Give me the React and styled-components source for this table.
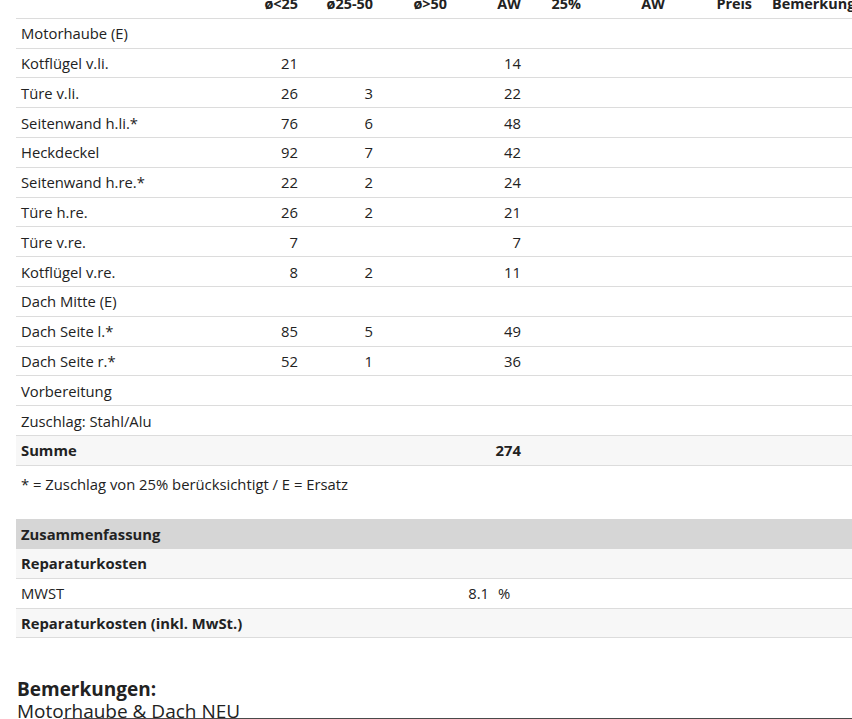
import React from "react";
import styled, { createGlobalStyle } from "styled-components";

const Global = createGlobalStyle`
  html, body { margin: 0; padding: 0; background: #fff; overflow: hidden; }
  body { font-family: "Open Sans", "Liberation Sans", sans-serif; color: #222; font-size: 14.8px; }
`;

const Page = styled.div`
  width: 960px;
  padding-left: 16px;
  margin-top: -11px;
`;

const Table = styled.table`
  width: 100%;
  border-collapse: collapse;
  table-layout: fixed;
  font-size: 14.8px;
`;

const Row = styled.tr`
  background: ${(p) => (p.$shade === "dark" ? "#d6d6d6" : p.$shade === "light" ? "#f7f7f7" : "#fff")};
  border-bottom: ${(p) => (p.$noLine ? "none" : "1px solid #dcdcdc")};
`;

const Head = styled.th`
  height: 28.8px;
  padding: 0 5px;
  font-weight: 700;
  font-size: 14.4px;
  text-align: ${(p) => (p.$left ? "left" : "right")};
  white-space: nowrap;
  overflow: visible;
`;

const Cell = styled.td`
  height: ${(p) => p.$h ?? 28.8}px;
  padding: 0 ${(p) => (p.$padR ?? 5)}px 0 ${(p) => (p.$padL ?? 5)}px;
  text-align: ${(p) => (p.$right ? "right" : "left")};
  font-weight: ${(p) => (p.$bold ? 700 : 400)};
  white-space: nowrap;
`;

const Note = styled.p`
  margin: 0;
  padding: 8px 0 0 5px;
  line-height: 20px;
`;

const Summary = styled(Table)`
  margin-top: 25px;
`;

const Remarks = styled.section`
  margin-top: 40px;
  position: relative;
`;

const RemarksTitle = styled.h3`
  margin: 0;
  font-size: 19px;
  font-weight: 700;
  line-height: 22px;
  padding-left: 1px;
`;

const RemarksText = styled.div`
  font-size: 19px;
  line-height: 22px;
  padding-left: 1px;
  position: relative;
  &::after {
    content: "";
    position: absolute;
    left: 47px;
    right: 0;
    top: 18px;
    height: 1px;
    background: #4a4a4a;
  }
`;

const rows = [
  ["Motorhaube (E)", "", "", "", ""],
  ["Kotflügel v.li.", "21", "", "", "14"],
  ["Türe v.li.", "26", "3", "", "22"],
  ["Seitenwand h.li.*", "76", "6", "", "48"],
  ["Heckdeckel", "92", "7", "", "42"],
  ["Seitenwand h.re.*", "22", "2", "", "24"],
  ["Türe h.re.", "26", "2", "", "21"],
  ["Türe v.re.", "7", "", "", "7"],
  ["Kotflügel v.re.", "8", "2", "", "11"],
  ["Dach Mitte (E)", "", "", "", ""],
  ["Dach Seite l.*", "85", "5", "", "49"],
  ["Dach Seite r.*", "52", "1", "", "36"],
  ["Vorbereitung", "", "", "", ""],
  ["Zuschlag: Stahl/Alu", "", "", "", ""],
];

export default function App() {
  return (
    <>
      <Global />
      <Page>
        <Table>
          <colgroup>
            <col style={{ width: 234 }} />
            <col style={{ width: 53 }} />
            <col style={{ width: 75 }} />
            <col style={{ width: 74 }} />
            <col style={{ width: 74 }} />
            <col style={{ width: 60 }} />
            <col style={{ width: 84 }} />
            <col style={{ width: 87 }} />
            <col />
          </colgroup>
          <thead>
            <Row>
              <Head $left></Head>
              <Head>ø&lt;25</Head>
              <Head>ø25-50</Head>
              <Head>ø&gt;50</Head>
              <Head>AW</Head>
              <Head>25%</Head>
              <Head>AW</Head>
              <Head>Preis</Head>
              <Head $left style={{ paddingLeft: 15 }}>Bemerkungen</Head>
            </Row>
          </thead>
          <tbody>
            {rows.map((r) => (
              <Row key={r[0]}>
                <Cell>{r[0]}</Cell>
                <Cell $right>{r[1]}</Cell>
                <Cell $right>{r[2]}</Cell>
                <Cell $right>{r[3]}</Cell>
                <Cell $right>{r[4]}</Cell>
                <Cell />
                <Cell />
                <Cell />
                <Cell />
              </Row>
            ))}
            <Row $shade="light">
              <Cell $bold>Summe</Cell>
              <Cell />
              <Cell />
              <Cell />
              <Cell $right $bold>274</Cell>
              <Cell />
              <Cell />
              <Cell />
              <Cell />
            </Row>
          </tbody>
        </Table>
        <Note>* = Zuschlag von 25% berücksichtigt / E = Ersatz</Note>
        <Summary>
          <colgroup>
            <col style={{ width: 400 }} />
            <col style={{ width: 78 }} />
            <col style={{ width: 40 }} />
            <col />
          </colgroup>
          <tbody>
            <Row $shade="dark" $noLine>
              <Cell $bold $h={30} colSpan={4}>Zusammenfassung</Cell>
            </Row>
            <Row $shade="light">
              <Cell $bold $h={29} colSpan={4}>Reparaturkosten</Cell>
            </Row>
            <Row>
              <Cell $h={29}>MWST</Cell>
              <Cell $h={29} $right>8.1</Cell>
              <Cell $h={29} $padL={4}>%</Cell>
              <Cell $h={29} />
            </Row>
            <Row $shade="light">
              <Cell $bold $h={28} colSpan={4}>Reparaturkosten (inkl. MwSt.)</Cell>
            </Row>
          </tbody>
        </Summary>
        <Remarks>
          <RemarksTitle>Bemerkungen:</RemarksTitle>
          <RemarksText>Motorhaube &amp; Dach NEU</RemarksText>
        </Remarks>
      </Page>
    </>
  );
}
